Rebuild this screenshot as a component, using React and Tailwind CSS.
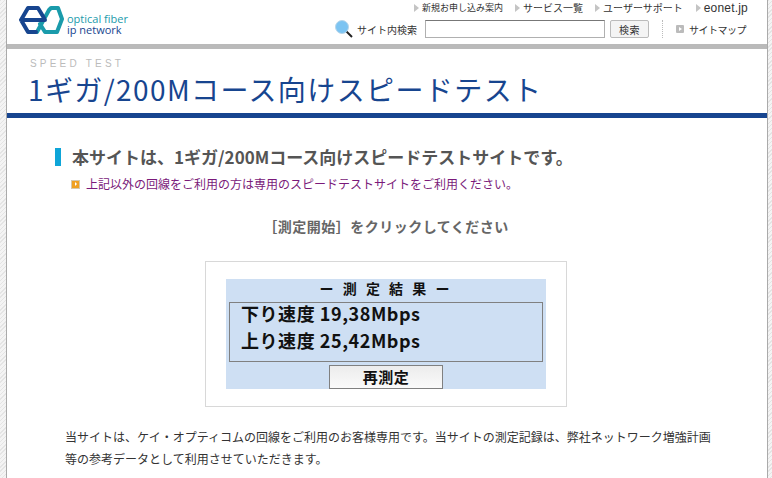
const jp = "font-['Noto_Sans_CJK_JP','Noto_Sans',sans-serif]";

function Logo() {
  return (
    <svg width="46" height="30" viewBox="0 0 46 30" fill="none" strokeWidth="4" strokeLinejoin="round" strokeLinecap="round">
      <path d="M19 27 L31 5 L33 3 H40 L44 14 L39 27 H27 L22 19" stroke="#1a9bab" />
      <path d="M27 15 H3 L10 3 H20 L26 13 M3 15 L10 27 H18" stroke="#17458f" />
    </svg>
  );
}

function Arrow() {
  return <span className="w-0 h-0 border-y-[4px] border-y-transparent border-l-[5px] border-l-[#c4c4c4] mr-[3px]" />;
}

function NavItem({ label, className }) {
  return (
    <span className={`flex items-center ${className}`}>
      <Arrow />
      {label}
    </span>
  );
}

function Header() {
  return (
    <header className="h-[44px] flex justify-between">
      <div className="flex items-start pt-[5px] pl-[11px]">
        <Logo />
        <div className="text-[11px] leading-[11px] font-['Open_Sans',sans-serif] font-medium mt-[8px] ml-[3px]">
          <p className="text-[#1a9bab]">optical fiber</p>
          <p className="text-[#17458f]">ip network</p>
        </div>
      </div>
      <div className="flex flex-col items-end pr-[19px] text-[#333]">
        <nav className="flex items-center h-[15px] text-[10px]">
          <NavItem label={<span className="text-[9px]">新規お申し込み案内</span>} className="mr-[12px]" />
          <NavItem label="サービス一覧" className="mr-[12px]" />
          <NavItem label="ユーザーサポート" className="mr-[13px]" />
          <NavItem label="eonet.jp" className="text-[12px] tracking-[0.2px] font-['Liberation_Sans',sans-serif]" />
        </nav>
        <div className="flex items-center mt-[4px] pr-[2px] text-[10px]">
          <svg width="20" height="20" viewBox="0 0 20 20" className="mr-[3px]">
            <line x1="11" y1="11" x2="18" y2="18" stroke="#222" strokeWidth="2" />
            <circle cx="8" cy="8" r="6.5" fill="#7cc4f2" stroke="#b8d6ea" />
          </svg>
          <span className="mr-[8px]">サイト内検索</span>
          <input className="w-[180px] h-[18px] bg-white border border-[#b0b0b0] border-t-[#777]" />
          <button className="w-[39px] h-[18px] ml-[5px] bg-[#f4f4f4] border border-[#bbb] rounded-[2px] text-[10px] tracking-[0.5px]">
            検索
          </button>
          <span className="h-[18px] border-l border-dotted border-[#bbb] ml-[13px] mr-[13px]" />
          <span className="w-[8px] h-[8px] bg-[#bbb] rounded-[1px] mr-[5px] flex items-center justify-center">
            <span className="w-0 h-0 border-y-[2px] border-y-transparent border-l-[3px] border-l-white" />
          </span>
          <span className="tracking-[-0.5px]">サイトマップ</span>
        </div>
      </div>
    </header>
  );
}

function ResultPanel() {
  return (
    <div className="w-[362px] h-[146px] ml-[198px] border border-[#d8d8d8] px-[20px] pt-[17px]">
      <div className="h-[110px] bg-[#cedff3] px-[3px] flex flex-col text-[#111]">
        <p className="h-[23px] leading-[19px] text-center text-[14px] font-bold tracking-[3px]">ー 測 定 結 果 ー</p>
        <div className="h-[60px] border border-[#808080] pl-[11px] text-[18px] font-semibold tracking-[0.55px]">
          <p className="h-[20px] leading-[20px]">下り速度 19,38Mbps</p>
          <p className="h-[20px] leading-[20px] mt-[7px]">上り速度 25,42Mbps</p>
        </div>
        <button className="w-[114px] h-[24px] mx-auto mt-[3px] bg-gradient-to-b from-[#ececec] to-[#fafafa] border border-[#808080] text-[15px] leading-[20px] font-bold tracking-[0.5px]">
          再測定
        </button>
      </div>
    </div>
  );
}

export default function App() {
  return (
    <div className={`h-[478px] overflow-hidden flex bg-white ${jp}`}>
      <div className="w-[6px] bg-[repeating-linear-gradient(135deg,#e4e4e4_0,#e4e4e4_1px,#f4f4f4_1px,#f4f4f4_3px)] shrink-0" />
      <div className="flex-1 min-w-0 border-x border-[#aaa]">
        <Header />
        <div className="h-[5px] bg-[#bababa]" />
        <div className="h-[64px] pl-[21px]">
          <p className="text-[10px] leading-[12px] pt-[9px] pl-[2px] h-[20px] tracking-[3.2px] text-[#bbb] font-['Liberation_Sans',sans-serif]">SPEED TEST</p>
          <h1 className="text-[28px] leading-[40px] text-[#17458f] tracking-[1.4px] whitespace-nowrap">1ギガ/200Mコース向けスピードテスト</h1>
        </div>
        <div className="h-[5px] bg-[#17458f]" />
        <main className="pt-[29px]">
          <div className="ml-[48px] flex items-center h-[19px]">
            <span className="w-[6px] h-[18px] bg-[#0ea5d8] mr-[11px]" />
            <h2 className="text-[17px] font-bold text-[#555] whitespace-nowrap">本サイトは、1ギガ/200Mコース向けスピードテストサイトです。</h2>
          </div>
          <div className="ml-[64px] mt-[11px] flex items-center h-[14px] text-[12px] text-[#7a1a7a]">
            <span className="w-[9px] h-[9px] bg-[#f0a020] border border-[#d8c8a8] mr-[6px] flex items-center justify-center">
              <span className="w-0 h-0 border-y-[2px] border-y-transparent border-l-[2px] border-l-white" />
            </span>
            上記以外の回線をご利用の方は専用のスピードテストサイトをご利用ください。
          </div>
          <p className="text-center text-[14px] font-bold text-[#666] tracking-[0.5px] mt-[25px] h-[20px] leading-[20px] pr-[2px]">［測定開始］をクリックしてください</p>
          <div className="mt-[25px]">
            <ResultPanel />
          </div>
          <p className="ml-[58px] w-[650px] mt-[19px] text-[12px] leading-[22px] text-[#333]">
            当サイトは、ケイ・オプティコムの回線をご利用のお客様専用です。当サイトの測定記録は、弊社ネットワーク増強計画等の参考データとして利用させていただきます。
          </p>
        </main>
      </div>
      <div className="w-[4px] bg-[repeating-linear-gradient(135deg,#e4e4e4_0,#e4e4e4_1px,#f4f4f4_1px,#f4f4f4_3px)] shrink-0" />
    </div>
  );
}
